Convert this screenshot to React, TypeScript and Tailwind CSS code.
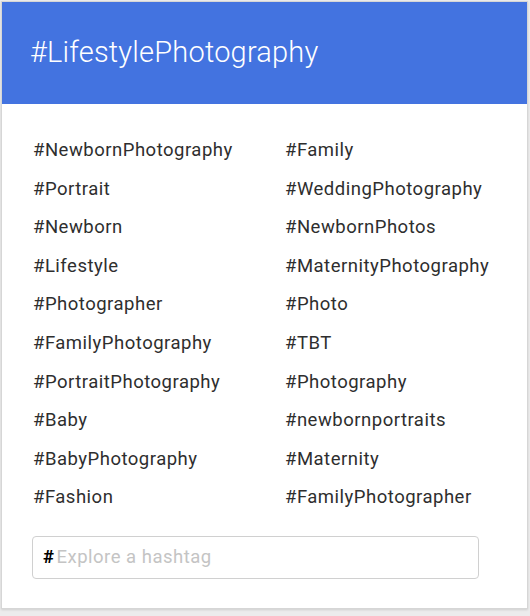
const tags: [string, string][] = [
  ["#NewbornPhotography", "#Family"],
  ["#Portrait", "#WeddingPhotography"],
  ["#Newborn", "#NewbornPhotos"],
  ["#Lifestyle", "#MaternityPhotography"],
  ["#Photographer", "#Photo"],
  ["#FamilyPhotography", "#TBT"],
  ["#PortraitPhotography", "#Photography"],
  ["#Baby", "#newbornportraits"],
  ["#BabyPhotography", "#Maternity"],
  ["#Fashion", "#FamilyPhotographer"],
]

export default function App() {
  return (
    <div className="w-[530px] h-[616px] bg-[#ececec] pt-px pl-px font-['Roboto',sans-serif]">
      <div className="w-[527px] border border-[#d6d6d6] bg-white shadow-[0_1px_2px_rgba(0,0,0,0.12)]">
        <div className="h-[102px] bg-[#4373e0] flex items-center pl-[28px]">
          <h1 className="text-white text-[29px] font-light tracking-[0.2px]">#LifestylePhotography</h1>
        </div>
        <div className="pt-[27px] pl-[31px] pb-[29px]">
          <ul className="grid grid-cols-[252px_1fr] text-[18.5px] tracking-[0.5px] leading-[38.6px] text-[#2e2e2e]">
            {tags.flat().map((t) => (
              <li key={t}>{t}</li>
            ))}
          </ul>
          <div className="mt-[19px] -ml-px w-[447px] h-[43px] border border-[#d0d0d0] rounded-[4px] flex items-center pl-[10px] text-[18.5px] tracking-[0.5px]">
            <span className="font-bold text-black mr-[2px]">#</span>
            <input
              className="flex-1 min-w-0 outline-none placeholder:text-[#c4c4c4] bg-transparent tracking-[0.5px]"
              placeholder="Explore a hashtag"
            />
          </div>
        </div>
      </div>
    </div>
  )
}
